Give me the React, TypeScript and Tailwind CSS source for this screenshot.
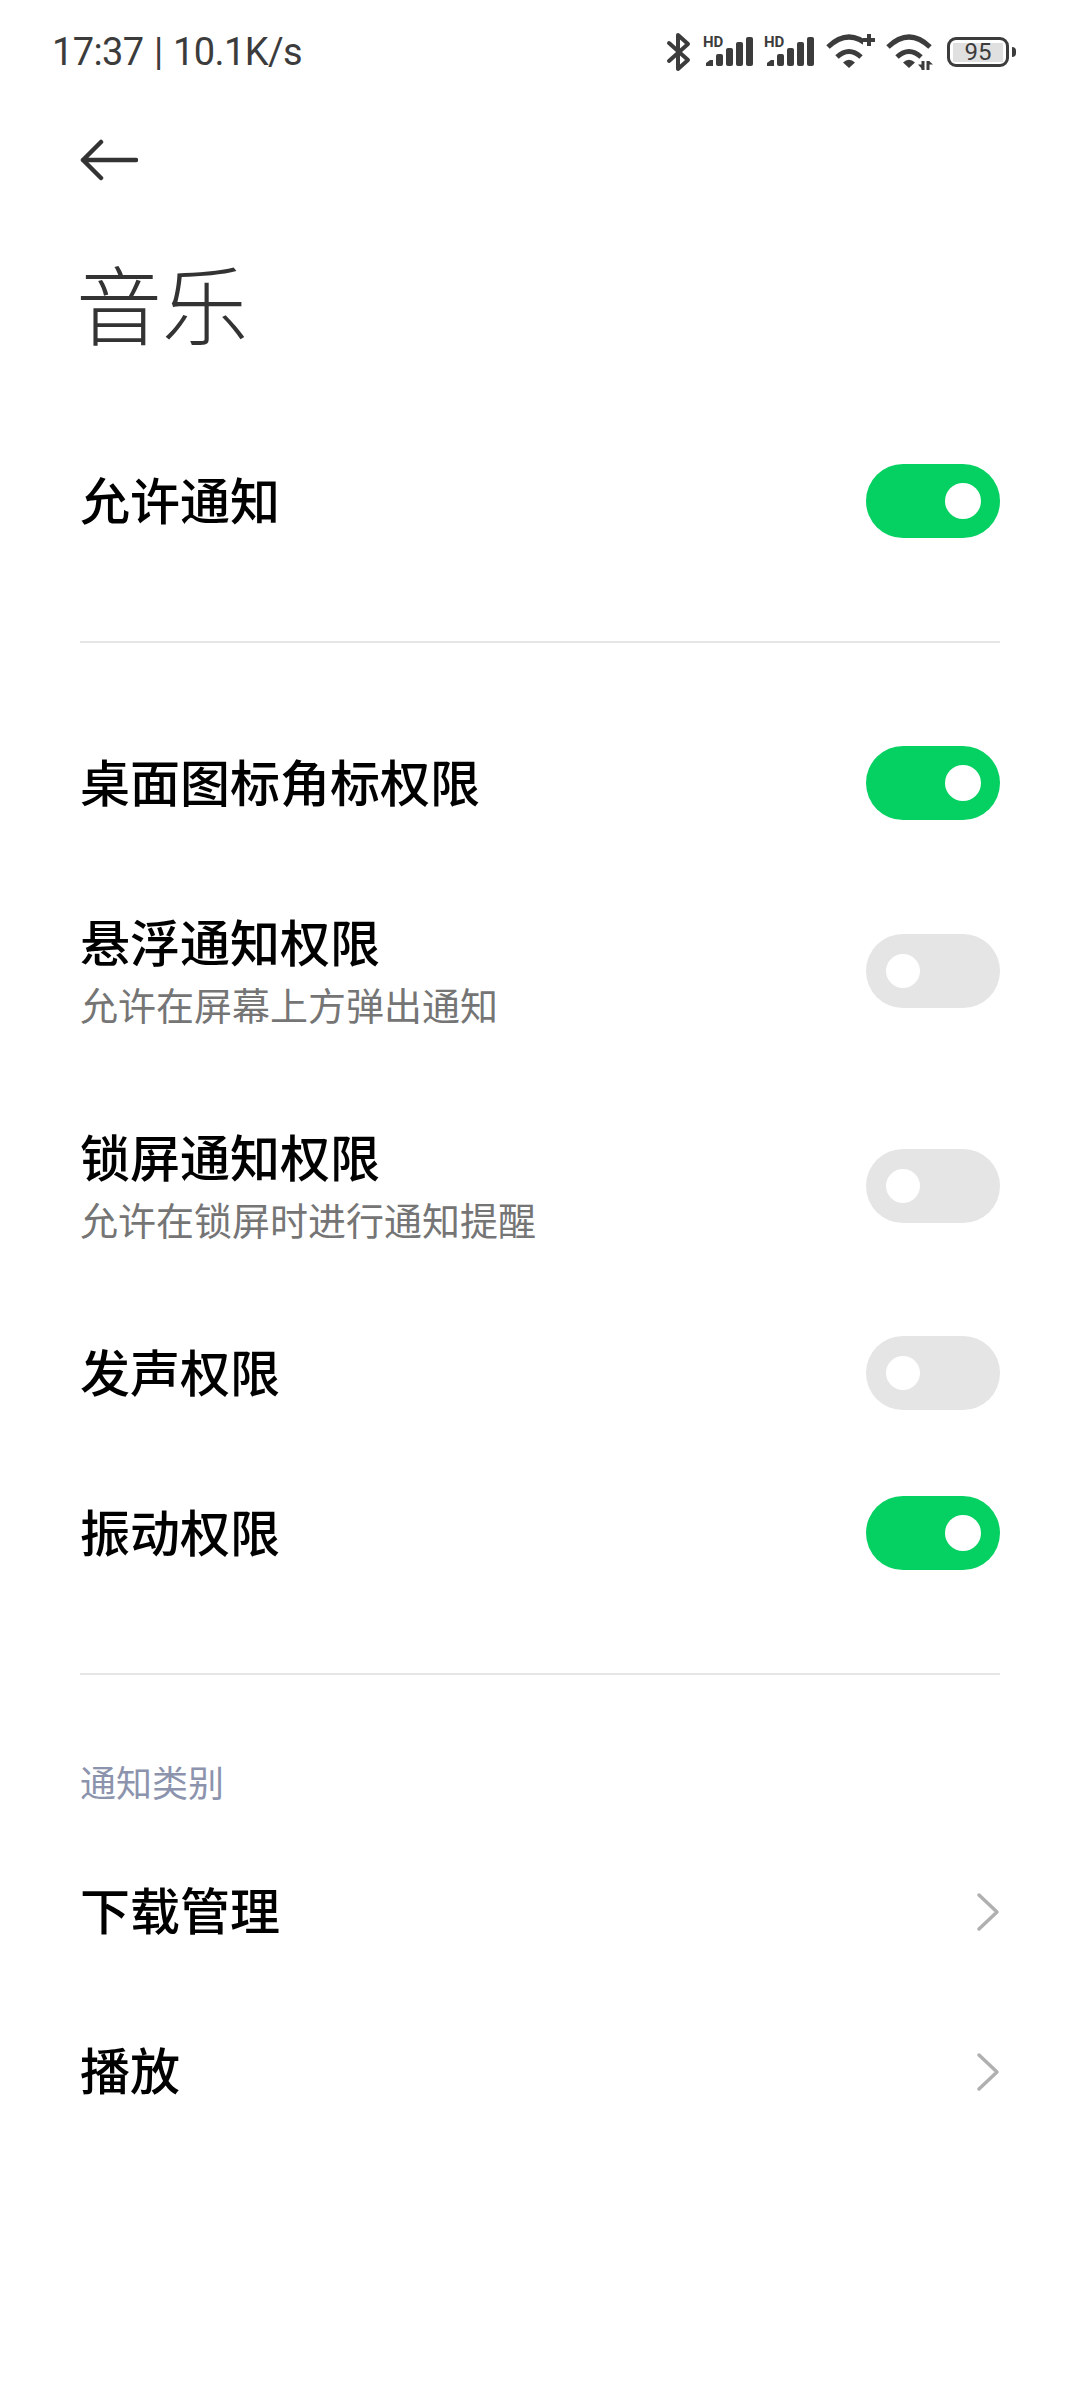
const cjk = "font-['Noto_Sans_CJK_SC','Noto_Sans',sans-serif]";

function Toggle({ on }: { on: boolean }) {
  return (
    <div
      className={`flex h-[74px] w-[134px] shrink-0 items-center rounded-full ${
        on ? "justify-end bg-[#05d162] pr-[19px]" : "justify-start bg-[#e5e5e5] pl-[20px]"
      }`}
    >
      <div className={`rounded-full bg-white ${on ? "h-[36px] w-[36px]" : "h-[34px] w-[34px]"}`} />
    </div>
  );
}

function Row({ title, sub, on }: { title: string; sub?: string; on: boolean }) {
  return (
    <div className={`flex items-center justify-between ${sub ? "h-[215px]" : "h-[160px]"}`}>
      <div className={sub ? "pb-[4px]" : "pb-[6px]"}>
        <div className="text-[50px] leading-[64px] font-medium text-black">{title}</div>
        {sub && <div className="mt-[7px] text-[38px] leading-[50px] text-[#757575]">{sub}</div>}
      </div>
      <Toggle on={on} />
    </div>
  );
}

function LinkRow({ title }: { title: string }) {
  return (
    <div className="flex h-[160px] items-center justify-between">
      <div className="pb-[8px] text-[50px] leading-[64px] font-medium text-black">{title}</div>
      <svg width="24" height="40" viewBox="0 0 24 40" fill="none" stroke="#b0b0b0" strokeWidth="3.5" strokeLinecap="round" strokeLinejoin="round">
        <path d="M3 3 L21 20 L3 37" />
      </svg>
    </div>
  );
}

function Signal() {
  return (
    <div className="relative h-[30px] w-[50px]">
      <span className="absolute left-0 top-[-3px] font-['Roboto',sans-serif] text-[15px] leading-[16px] font-bold text-[#3c3c3c]">HD</span>
      <svg width="50" height="30" viewBox="0 0 50 30" fill="#3c3c3c">
        <path d="M3 29 V26 L7 23 H10 V29 Z" />
        <rect x="13" y="17" width="7" height="12" rx="2" />
        <rect x="23" y="11" width="7" height="18" rx="2" />
        <rect x="33" y="5" width="7" height="24" rx="2" />
        <rect x="43" y="0" width="7" height="29" rx="2" />
      </svg>
    </div>
  );
}

function Wifi({ extra }: { extra: "plus" | "arrows" }) {
  return (
    <svg width="50" height="36" viewBox="0 0 50 36" fill="none" stroke="#3c3c3c" strokeWidth="5">
      <path d="M2 13 Q23 -7 44 13" />
      <path d="M11 23 Q23 12 35 23" />
      <path d="M23 34 L17 28.5 Q23 23 29 28.5 Z" fill="#3c3c3c" stroke="none" />
      {extra === "plus" ? (
        <g>
          <rect x="37" y="0" width="13" height="16" fill="#fff" stroke="none" />
          <path d="M37 6 H49 M43 0 V12" strokeWidth="4" />
        </g>
      ) : (
        <g fill="#3c3c3c" stroke="none">
          <rect x="35.5" y="27" width="3" height="9" />
          <rect x="40.5" y="27" width="3" height="9" />
          <path d="M32 30.5 H36 V35 Z" />
          <path d="M47 30.5 H43 V27 Z" />
        </g>
      )}
    </svg>
  );
}

function StatusIcons() {
  return (
    <div className="flex items-center">
      <svg width="26" height="40" viewBox="0 0 26 40" fill="none" stroke="#3c3c3c" strokeWidth="4" strokeLinejoin="round" strokeLinecap="round">
        <path d="M3 11 L22 28 L12 37 V3 L22 12 L3 29" />
      </svg>
      <div className="ml-[11px] flex"><Signal /></div>
      <div className="ml-[11px] flex"><Signal /></div>
      <div className="ml-[12px] flex"><Wifi extra="plus" /></div>
      <div className="ml-[10px] flex"><Wifi extra="arrows" /></div>
      <div className="ml-[11px] flex items-center">
        <div className="flex h-[30px] w-[62px] items-center justify-center rounded-[9px] border-[3px] border-[#3c3c3c] p-[3px]">
          <div className="flex h-[19px] w-full items-center justify-center bg-[#e0e0e0] font-['Roboto',sans-serif] text-[24px] leading-none text-[#3c3c3c]">
            95
          </div>
        </div>
        <div className="ml-[3px] h-[10px] w-[4px] rounded-r-full bg-[#3c3c3c]" />
      </div>
    </div>
  );
}

export default function App() {
  return (
    <div className={`flex min-h-[2400px] w-[1080px] flex-col bg-white ${cjk}`}>
      <div className="flex h-[104px] items-center justify-between pl-[52px] pr-[64px]">
        <span className="font-['Roboto',sans-serif] text-[38px] tracking-[-0.6px] [word-spacing:1.5px] text-[#3c3c3c]">17:37 | 10.1K/s</span>
        <StatusIcons />
      </div>

      <div className="flex flex-col px-[80px]">
        <div className="flex h-[112px] items-center">
          <svg width="58" height="42" viewBox="0 0 58 42" fill="none" stroke="#333" strokeWidth="4.5" strokeLinecap="round" strokeLinejoin="round">
            <path d="M56 21 H3 M21 3 L3 21 L21 39" />
          </svg>
        </div>
        <div className="ml-[-4px] h-[205px] pt-[28px] text-[86px] leading-[116px] font-light text-[#333]">音乐</div>

        <Row title="允许通知" on />
        <div className="mt-[60px] h-[2px] bg-[#e6e6e6]" />
        <div className="mt-[60px]">
          <Row title="桌面图标角标权限" on />
          <Row title="悬浮通知权限" sub="允许在屏幕上方弹出通知" on={false} />
          <Row title="锁屏通知权限" sub="允许在锁屏时进行通知提醒" on={false} />
          <Row title="发声权限" on={false} />
          <Row title="振动权限" on />
        </div>
        <div className="mt-[60px] h-[2px] bg-[#e6e6e6]" />

        <div className="mt-[82px] text-[36px] leading-[48px] text-[#8c93ad]">通知类别</div>
        <div className="mt-[27px]">
          <LinkRow title="下载管理" />
          <LinkRow title="播放" />
        </div>
      </div>
    </div>
  );
}
